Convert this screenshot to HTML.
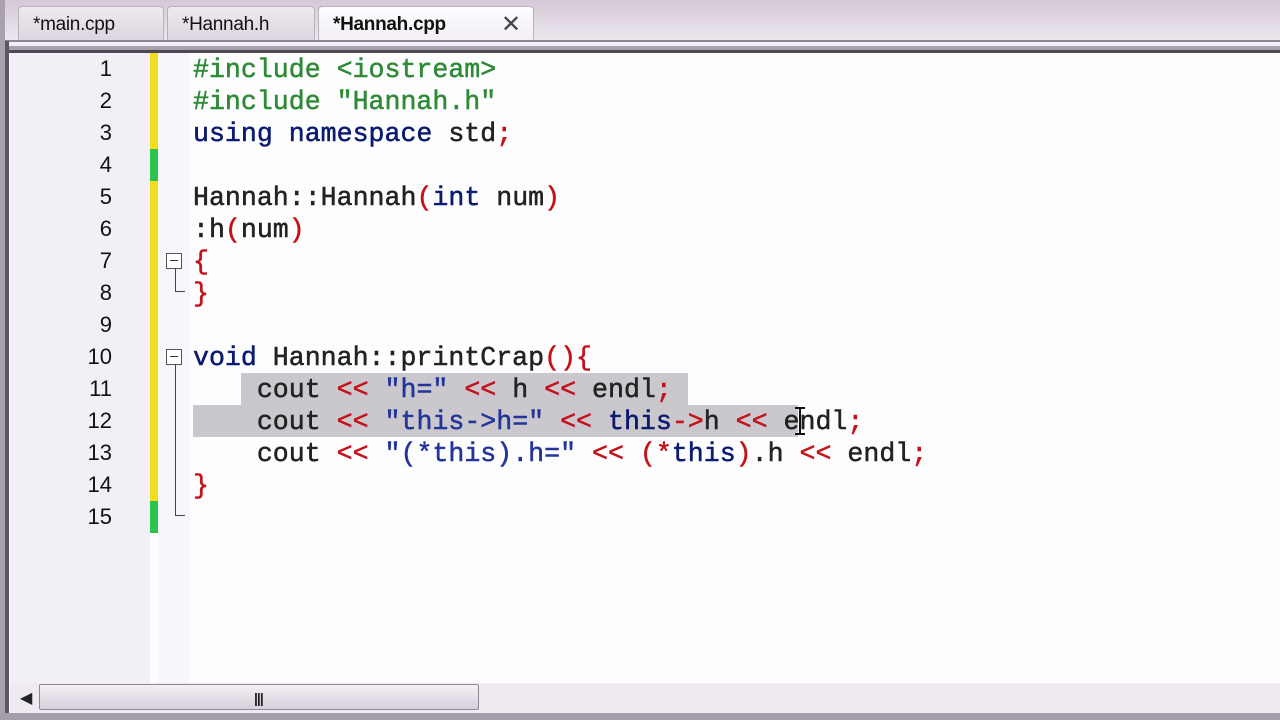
<!DOCTYPE html>
<html><head><style>
body{margin:0;width:1280px;height:720px;overflow:hidden;background:#fdfcfe;position:relative;font-family:"Liberation Sans",sans-serif}
.tabbar{position:absolute;left:0;top:0;width:1280px;height:41px;background:linear-gradient(#d4c9d6,#ede7ef)}
.tab{position:absolute;top:6px;height:35px;border:1px solid #b8b0bb;border-bottom:none;border-radius:4px 4px 0 0;background:linear-gradient(#efeaf1,#dcd4de);font-size:19px;line-height:36px;color:#111;padding-left:14px;box-sizing:border-box;letter-spacing:-0.3px}
.sep{position:absolute;left:0;width:1280px}
.gut{position:absolute;left:10px;top:53px;width:140px;height:630px;background:#f3eff7}
.fm{position:absolute;left:158px;top:53px;width:32px;height:630px;background:#f8f6fa}
.lb{position:absolute;left:0;top:0;width:5px;height:720px;background:#a9a1ad}
.lb2{position:absolute;left:5px;top:41px;width:4px;height:679px;background:#5c5660}
.bar{position:absolute;left:150px;width:8px}
.ln{position:absolute;left:60px;width:52px;text-align:right;font-family:"Liberation Sans",sans-serif;font-size:22px;color:#111;height:32px;line-height:32px}
.code{position:absolute;left:193px;font-family:"Liberation Mono",monospace;font-size:26.6px;height:32px;line-height:34px;white-space:pre;color:#222;-webkit-text-stroke:0.5px currentColor}
.k{color:#0a1a6e}.o{color:#c4121a}.s{color:#23359a}.p{color:#2f8a36}
.sel{position:absolute;background:#cac8cc}
.fold{position:absolute;left:166px;width:16px;height:16px;border:1px solid #555;box-sizing:border-box;background:#fff}
.fold:after{content:"";position:absolute;left:3px;top:6px;width:8px;height:1px;background:#333}
.vl{position:absolute;left:175px;width:1px;background:#444}
.hl{position:absolute;left:175px;height:1px;width:10px;background:#444}
</style></head><body>
<div class="tabbar"></div>
<div class="tab" style="left:18px;width:146px">*main.cpp</div>
<div class="tab" style="left:167px;width:148px">*Hannah.h</div>
<div class="tab" style="left:318px;width:216px;background:linear-gradient(#fdfcfe,#f2eef4);font-weight:bold;height:36px">*Hannah.cpp<span style="position:absolute;left:182px;top:0;font-weight:normal;font-size:24px;color:#444">✕</span></div>
<div class="sep" style="top:40px;height:2px;background:#8d8590"></div>
<div class="sep" style="top:42px;height:4px;background:#f3eff6"></div>
<div class="sep" style="top:46px;height:4px;background:#a79fab"></div>
<div class="sep" style="top:50px;height:3px;background:#4e4852"></div>
<div class="lb"></div><div class="lb2"></div>
<div class="gut"></div><div class="fm"></div>
<div class="bar" style="top:53px;height:96px;background:#f1de22"></div>
<div class="bar" style="top:149px;height:32px;background:#2bc44f"></div>
<div class="bar" style="top:181px;height:320px;background:#f1de22"></div>
<div class="bar" style="top:501px;height:32px;background:#2bc44f"></div>

<div class="sel" style="left:241px;top:373px;width:447px;height:32px"></div>
<div class="sel" style="left:193px;top:405px;width:605px;height:32px"></div>

<div class="fold" style="top:253px"></div>
<div class="vl" style="top:269px;height:22px"></div><div class="hl" style="top:291px"></div>
<div class="fold" style="top:349px"></div>
<div class="vl" style="top:365px;height:150px"></div><div class="hl" style="top:515px"></div>

<div class="ln" style="top:53px">1</div><div class="ln" style="top:85px">2</div><div class="ln" style="top:117px">3</div><div class="ln" style="top:149px">4</div><div class="ln" style="top:181px">5</div><div class="ln" style="top:213px">6</div><div class="ln" style="top:245px">7</div><div class="ln" style="top:277px">8</div><div class="ln" style="top:309px">9</div><div class="ln" style="top:341px">10</div><div class="ln" style="top:373px">11</div><div class="ln" style="top:405px">12</div><div class="ln" style="top:437px">13</div><div class="ln" style="top:469px">14</div><div class="ln" style="top:501px">15</div>

<div class="code" style="top:53px"><span class="p">#include &lt;iostream&gt;</span></div>
<div class="code" style="top:85px"><span class="p">#include "Hannah.h"</span></div>
<div class="code" style="top:117px"><span class="k">using namespace</span> std<span class="o">;</span></div>
<div class="code" style="top:181px">Hannah::Hannah<span class="o">(</span><span class="k">int</span> num<span class="o">)</span></div>
<div class="code" style="top:213px">:h<span class="o">(</span>num<span class="o">)</span></div>
<div class="code" style="top:245px"><span class="o">{</span></div>
<div class="code" style="top:277px"><span class="o">}</span></div>
<div class="code" style="top:341px"><span class="k">void</span> Hannah::printCrap<span class="o">(){</span></div>
<div class="code" style="top:373px">    cout <span class="o">&lt;&lt;</span> <span class="s">"h="</span> <span class="o">&lt;&lt;</span> h <span class="o">&lt;&lt;</span> endl<span class="o">;</span></div>
<div class="code" style="top:405px">    cout <span class="o">&lt;&lt;</span> <span class="s">"this-&gt;h="</span> <span class="o">&lt;&lt;</span> <span class="k">this</span><span class="o">-&gt;</span>h <span class="o">&lt;&lt;</span> endl<span class="o">;</span></div>
<div class="code" style="top:437px">    cout <span class="o">&lt;&lt;</span> <span class="s">"(*this).h="</span> <span class="o">&lt;&lt;</span> <span class="o">(*</span><span class="k">this</span><span class="o">)</span>.h <span class="o">&lt;&lt;</span> endl<span class="o">;</span></div>
<div class="code" style="top:469px"><span class="o">}</span></div>

<div style="position:absolute;left:799px;top:407px;width:2px;height:28px;background:#111"></div>
<div style="position:absolute;left:795px;top:407px;width:10px;height:2px;background:#111"></div>
<div style="position:absolute;left:795px;top:433px;width:10px;height:2px;background:#111"></div>

<div style="position:absolute;left:10px;top:683px;width:1270px;height:30px;background:#efe9f1"></div>
<div style="position:absolute;left:20px;top:688px;font-size:16px;color:#222">&#9664;</div>
<div style="position:absolute;left:39px;top:684px;width:440px;height:26px;border:1px solid #8e8892;border-radius:2px;background:linear-gradient(#f4f0f6,#d7cfda);box-sizing:border-box"></div>
<div style="position:absolute;left:254px;top:690px;font-size:14px;font-weight:bold;color:#222;letter-spacing:-1px">|||</div>
<div class="sep" style="top:713px;height:7px;background:#a59ea9"></div>
</body></html>
